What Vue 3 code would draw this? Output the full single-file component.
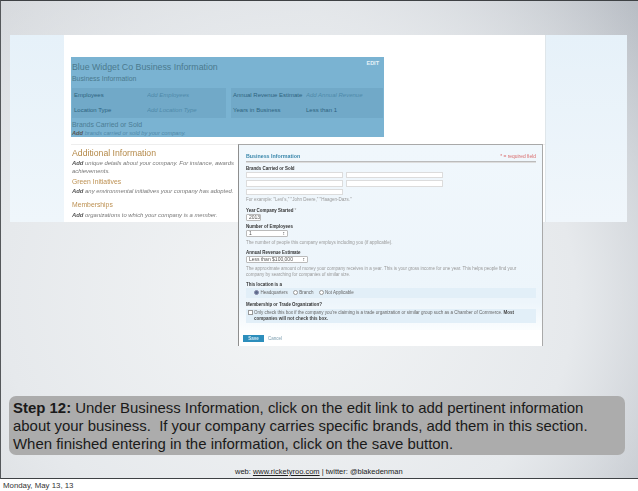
<script setup>
const rows = [
  ['Employees', 'Add Employees', 'Annual Revenue Estimate', 'Add Annual Revenue'],
  ['Location Type', 'Add Location Type', 'Years in Business', 'Less than 1']
]
</script>

<template>
  <div class="page">
    <section class="slide">
      <div class="shot">
        <div class="side"></div>
        <div class="main">
          <div class="crumb">Dashboard Home</div>
          <div class="blue">
            <div class="edit">EDIT</div>
            <h2>Blue Widget Co Business Information</h2>
            <div class="sub">Business Information</div>
            <div class="grid">
              <div v-for="r in rows" :key="r[0]" class="row">
                <span class="k k1">{{ r[0] }}</span>
                <i class="v v1">{{ r[1] }}</i>
                <span class="gap"></span>
                <span class="k k2">{{ r[2] }}</span>
                <span class="v v2" :class="{ it: r[3].startsWith('Add') }">{{ r[3] }}</span>
              </div>
            </div>
            <div class="sub brands">Brands Carried or Sold</div>
            <div class="addline"><b>Add</b> brands carried or sold by your company.</div>
          </div>
          <div class="additional">
            <h3>Additional Information</h3>
            <p><b>Add</b> unique details about your company. For instance, awards<br>achievements.</p>
            <h4>Green Initiatives</h4>
            <p><b>Add</b> any environmental initiatives your company has adopted.</p>
            <h4 class="mem">Memberships</h4>
            <p><b>Add</b> organizations to which your company is a member.</p>
          </div>
        </div>
        <div class="side right"></div>
      </div>

      <div class="form">
        <div class="fbody">
          <div class="fhead"><span>Business Information</span><em>* = required field</em></div>
          <label class="first">Brands Carried or Sold</label>
          <div class="inputs">
            <span class="in"></span><span class="in"></span>
            <span class="in"></span><span class="in"></span>
            <span class="in"></span>
          </div>
          <div class="hint h1">For example: "Levi's," "John Deere," "Haagen-Dazs."</div>
          <label class="l-year">Year Company Started <small>*</small></label>
          <div class="sel year">2013</div>
          <label class="l-num">Number of Employees</label>
          <div class="sel emp"><span>1</span><span>↕</span></div>
          <div class="hint">The number of people this company employs including you (if applicable).</div>
          <label>Annual Revenue Estimate</label>
          <div class="sel rev"><span>Less than $100,000</span><span>↕</span></div>
          <div class="hint">The approximate amount of money your company receives in a year. This is your gross income for one year. This helps people find your<br>company by searching for companies of similar size.</div>
          <label>This location is a</label>
          <div class="band radios">
            <span class="opt"><span class="radio on"></span>Headquarters</span>
            <span class="opt"><span class="radio"></span>Branch</span>
            <span class="opt"><span class="radio"></span>Not Applicable</span>
          </div>
          <label>Membership or Trade Organization?</label>
          <div class="band check">
            <span class="box"></span>
            <span>Only check this box if the company you're claiming is a trade organization or similar group such as a Chamber of Commerce. <b>Most<br>companies will not check this box.</b></span>
          </div>
        </div>
        <div class="actions"><span class="save">Save</span><span class="cancel">Cancel</span></div>
      </div>

      <div class="caption">
        <b>Step 12:</b> Under Business Information, click on the edit link to add pertinent information<br>
        about your business.&nbsp; If your company carries specific brands, add them in this section.<br>
        When finished entering in the information, click on the save button.
      </div>
      <div class="credit">web: <u>www.ricketyroo.com</u> | twitter: @blakedenman</div>
    </section>
    <footer class="date">Monday, May 13, 13</footer>
  </div>
</template>

<style>
html, body { margin: 0; background: #fff; }
</style>

<style scoped>
.page { width: 638px; height: 491px; overflow: hidden; font-family: "Liberation Sans", Arial, sans-serif; background: #fff; }
.slide {
  position: relative; box-sizing: border-box; width: 638px; height: 479px;
  padding: 34px 0 0 9px;
  border-top: 1px solid #3e4144; border-left: 1px solid #55585b; border-bottom: 1px solid #3e4144;
  background:
    radial-gradient(ellipse 480px 420px at 45% 62%, #f3f5f6 0%, #e6e9ec 60%, rgba(220,223,228,0) 100%),
    linear-gradient(90deg, #d3d6da 0%, #dcdfe3 50%, #b9bec5 100%);
}
.shot { display: flex; width: 617px; height: 187px; overflow: hidden; }
.side { width: 54px; background: linear-gradient(#e6f1f9, #eff6fb); }
.side.right { width: 82px; background: linear-gradient(#e6f1f9, #f0f6fb); border-left: 1px solid #dfe6ea; box-sizing: border-box; }
.main { flex: 1; background: #fff; padding-left: 7px; filter: blur(.5px); }
.crumb { height: 29px; margin-top: -7px; padding-left: 13px; font-size: 8px; line-height: 10px; color: #aaa; }
.blue { position: relative; box-sizing: border-box; width: 313px; height: 80px; background: #7ab3d2; color: #4b7a8e; padding-top: 4px; }
.edit { position: absolute; right: 5px; top: 3px; color: #e6f2f8; font-size: 5.5px; font-weight: bold; }
h2 { margin: 0; font-size: 8.8px; line-height: 12px; font-weight: normal; padding-left: 1px; }
.sub { font-size: 6.9px; line-height: 9px; margin-top: 1px; padding-left: 1px; }
.grid { margin-top: 5px; }
.row { display: flex; height: 15px; margin: 0 1px; align-items: center; font-size: 6px; color: #2e6480; }
.k, .v { display: block; height: 15px; line-height: 15px; background: #71a9c8; white-space: nowrap; overflow: hidden; }
.k1 { width: 75px; padding-left: 2px; box-sizing: border-box; }
.v1 { width: 79px; color: #4f89aa; }
.gap { width: 5px; }
.k2 { width: 75px; padding-left: 2px; box-sizing: border-box; }
.v2 { flex: 1; padding-right: 1px; }
.it { font-style: italic; color: #4f89aa; }
.sub.brands { margin-top: 1.5px; color: #4c7d94; }
.addline { font-size: 5.7px; line-height: 8px; font-style: italic; color: #4f88a8; padding-left: 1px; margin-top: .5px; }
.addline b, .additional b { color: #555; }
.additional { margin-top: 7px; padding-left: 1px; border-top: 1px solid #eee; padding-top: 3px; color: #777; }
.additional h3 { margin: 0; font-size: 8.7px; line-height: 11px; font-weight: normal; color: #b58a4a; }
.additional h4 { margin: 1.5px 0 0; font-size: 6.8px; line-height: 9px; font-weight: normal; color: #bd9153; }
.additional h4.mem { margin-top: 5.5px; }
.additional p { margin: 0; font-size: 5.9px; line-height: 8px; font-style: italic; }
.additional h4 + p { margin-top: 1px; }
.additional h4.mem + p { margin-top: 1.5px; }

.form {
  position: absolute; left: 237px; top: 143px; width: 305px; height: 202px; box-sizing: border-box;
  border-top: 1px solid #a9a9a9; border-left: 1px solid #8e8e8e; border-right: 1px solid #a9a9a9;
  background: #fff; filter: blur(.45px); color: #444; font-size: 4.5px;
  display: flex; flex-direction: column;
}
.fbody { flex: 1; box-sizing: border-box; background: linear-gradient(#f0f7fc, #edf5fb 85%, #fbfdfe); padding: 6px 6px 0 7px; }
.fhead { display: flex; justify-content: space-between; align-items: flex-end; height: 10px; border-bottom: 1px solid #bbb; font-size: 5.3px; line-height: 9px; font-weight: bold; color: #3a87ab; box-shadow: 0 1px 0 #ddd; }
.fhead em { font-style: normal; font-weight: normal; color: #d96a6a; font-size: 4.9px; }
label { display: block; margin-top: 3px; font-size: 4.45px; line-height: 7px; font-weight: bold; color: #333; }
label.first { margin-top: 2.5px; }
label.l-year { margin-top: 3.5px; }
label.l-num { margin-top: 2px; }
small { color: #999; font-weight: normal; font-size: 4.5px; }
.inputs { display: grid; grid-template-columns: 97px 97px; column-gap: 3px; row-gap: 2px; }
.in { box-sizing: border-box; height: 6.5px; background: #fff; border: 1px solid #dcdcdc; }
.hint { font-size: 4.5px; line-height: 6px; color: #999; margin-top: 3px; white-space: nowrap; }
.hint.h1 { margin-top: 2px; }
.sel { box-sizing: border-box; display: flex; justify-content: space-between; height: 7px; line-height: 5px; border: 1px solid #bbb; border-radius: 1px; background: #fff; padding: 0 2px; font-size: 5px; color: #555; }
.year { width: 15px; }
.emp { width: 42px; }
.rev { width: 62px; }
.band { background: #e2eff8; margin-top: 0; font-size: 4.5px; color: #666; }
.radios { height: 10px; padding-left: 8px; display: flex; align-items: center; gap: 5px; }
.opt { display: flex; align-items: center; gap: 1.5px; }
.radio { box-sizing: border-box; width: 5px; height: 5px; border: .5px solid #999; border-radius: 50%; background: #fff; }
.radio.on { background: #5b6b8a; border-color: #88a; }
.check { display: flex; gap: 1px; height: 14px; box-sizing: border-box; margin-top: 1px; padding: 1px 0 0 2px; line-height: 6px; white-space: nowrap; }
.check b { color: #444; }
.box { flex: none; box-sizing: border-box; width: 5px; height: 5px; border: .5px solid #999; background: #fff; margin-top: .5px; }
.actions { box-sizing: border-box; height: 16px; padding: 5px 0 0 4px; background: #fff; display: flex; gap: 2px; align-items: flex-start; }
.save { width: 21px; height: 7px; line-height: 7px; text-align: center; background: #2d8ebc; color: #d5eaf5; font-size: 4.5px; font-weight: bold; }
.cancel { color: #7a9cae; font-size: 4.5px; line-height: 7px; margin-left: 2px; }

.caption {
  box-sizing: border-box; width: 616px; height: 59px; margin: 174px 0 0 -1px; padding: 3px 0 0 4px;
  border-radius: 7px; background: #acacac; color: #1a1a1a; font-size: 14.95px; line-height: 18px; white-space: nowrap;
}
.credit { margin: 12px 0 0 225px; font-size: 7.5px; line-height: 10px; color: #222; white-space: nowrap; }
.date { padding: 2px 0 0 3px; font-size: 7.85px; line-height: 10px; color: #333; }
</style>
